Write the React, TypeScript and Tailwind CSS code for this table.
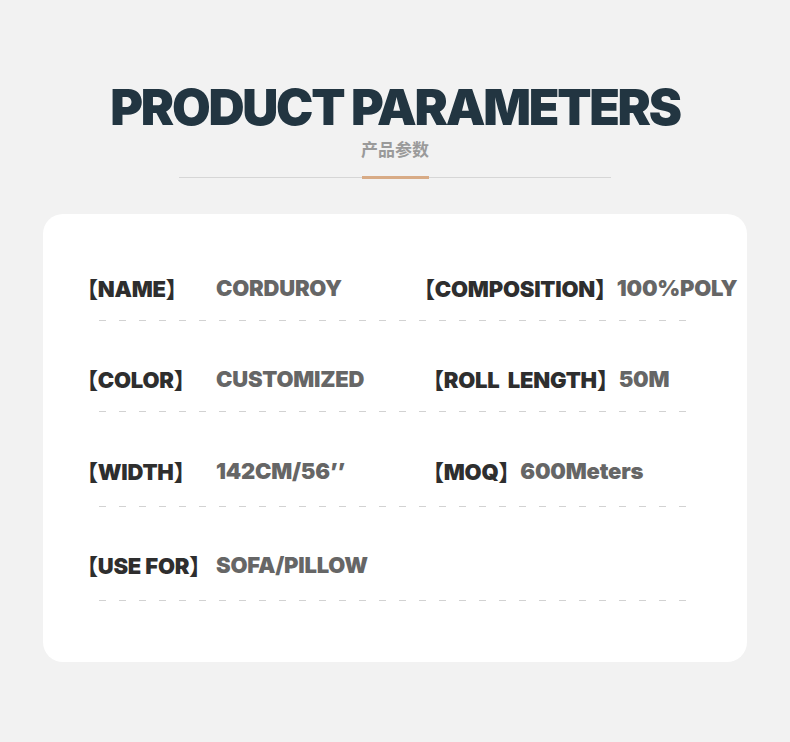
import React from "react";

const rows = [
  {
    left: { label: "NAME", value: "CORDUROY" },
    right: { label: "COMPOSITION", value: "100%POLY", shift: "ml-[-14px]" },
    textMt: "mt-[60px]",
    dashMt: "mt-[18px]",
  },
  {
    left: { label: "COLOR", value: "CUSTOMIZED" },
    right: { label: "ROLL\u00a0\u00a0LENGTH", value: "50M", shift: "ml-[-5px]" },
    textMt: "mt-[44px]",
    dashMt: "mt-[18px]",
  },
  {
    left: { label: "WIDTH", value: "142CM/56’’" },
    right: { label: "MOQ", value: "600Meters", shift: "ml-[-5px]" },
    textMt: "mt-[45px]",
    dashMt: "mt-[21px]",
  },
  {
    left: { label: "USE FOR", value: "SOFA/PILLOW" },
    right: null as null | { label: string; value: string; shift: string },
    textMt: "mt-[44px]",
    dashMt: "mt-[21px]",
  },
];

const font = "font-['Inter','Noto_Sans_CJK_SC',sans-serif]";
const cjk = "font-['Noto_Sans_CJK_SC',sans-serif] font-black";

export default function App() {
  return (
    <div className={`w-[790px] h-[742px] bg-[#f2f2f2] flex flex-col items-center ${font}`}>
      <h1 className="mt-[82px] text-[50px] leading-none font-black tracking-[-0.045em] text-[#223541] whitespace-nowrap">
        PRODUCT PARAMETERS
      </h1>
      <div className="mt-[8px] text-[17px] leading-none font-bold text-[#9a9a9a] font-['Noto_Sans_CJK_SC',sans-serif]">
        产品参数
      </div>
      <div className="relative mt-[19px] w-[432px] h-[3px]">
        <div className="absolute left-0 right-0 bottom-[1px] h-px bg-[#d6d6d6]" />
        <div className="absolute left-[183px] top-0 w-[67px] h-[3px] bg-[#d8ab86]" />
      </div>
      <div className="mt-[35px] w-[704px] h-[448px] bg-white rounded-[20px] flex flex-col">
        {rows.map((r, i) => (
          <div key={i} className="flex flex-col">
            <div className={`${r.textMt} flex items-center h-[28px] text-[22px] leading-[28px] font-black tracking-[-0.01em] whitespace-nowrap`}>
              <div className="ml-[33px] w-[351px] flex items-center">
                <span className="w-[140px] text-[#2e2e2e]">
                  <span className={cjk}>【</span>
                  {r.left.label}
                  <span className={cjk}>】</span>
                </span>
                <span className="text-[#666666]">{r.left.value}</span>
              </div>
              {r.right && (
                <div className={`flex items-center ${r.right.shift}`}>
                  <span className="text-[#2e2e2e]">
                    <span className={cjk}>【</span>
                    {r.right.label}
                    <span className={cjk}>】</span>
                  </span>
                  <span className="text-[#666666]">{r.right.value}</span>
                </div>
              )}
            </div>
            <div
              className={`${r.dashMt} ml-[56px] w-[588px] h-px bg-[repeating-linear-gradient(90deg,#d2d2d2_0px,#d2d2d2_7px,transparent_7px,transparent_20px)]`}
            />
          </div>
        ))}
      </div>
    </div>
  );
}
